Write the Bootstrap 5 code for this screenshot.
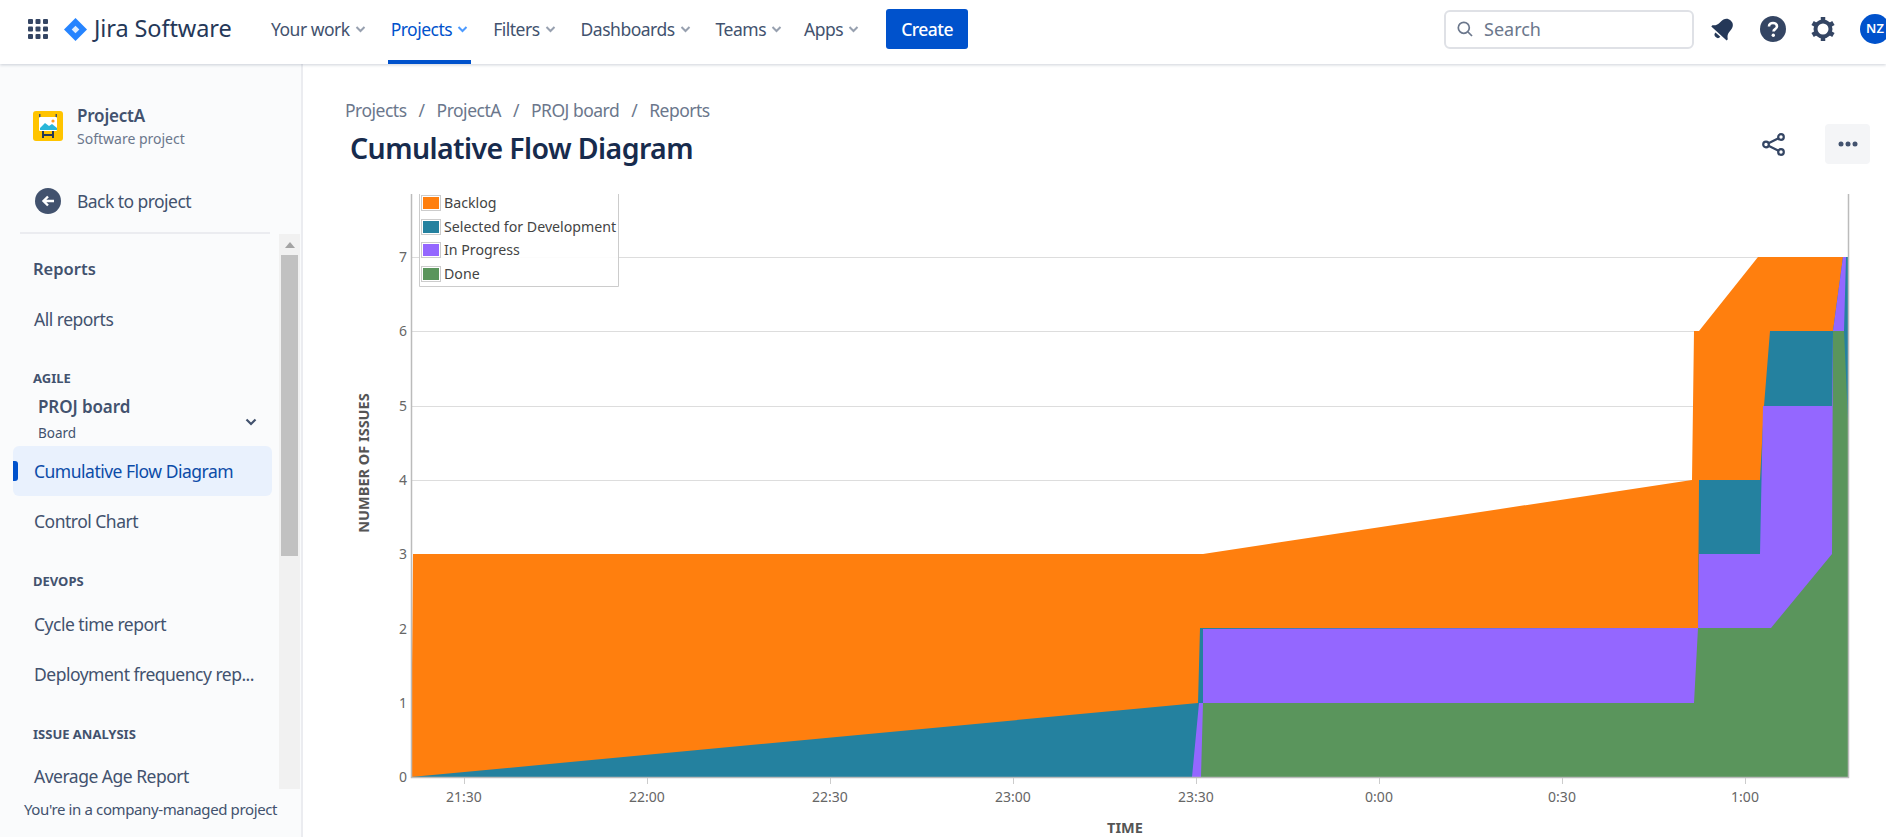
<!DOCTYPE html>
<html lang="en">
<head>
<meta charset="utf-8">
<title>Cumulative Flow Diagram</title>
<link href="https://cdn.jsdelivr.net/npm/bootstrap@5.3.0/dist/css/bootstrap.min.css" rel="stylesheet">
<style>
html,body{height:100%;overflow:hidden;}
body{font-family:"Noto Sans","Open Sans",sans-serif;color:#42526e;background:#fff;}
.topbar{height:64px;padding-bottom:6px;box-shadow:0 1px 3px rgba(9,30,66,.2);position:relative;z-index:2;background:#fff;}
.apps-ico{margin-left:28px;width:20px;height:20px;flex:none;}
.logo-ico{margin-left:16px;width:23px;height:23px;flex:none;}
.brand-name{margin-left:7px;width:174px;font-size:23.5px;color:#253858;flex:none;letter-spacing:-.1px;}
.nav-entry{height:58px;display:flex;align-items:center;font-size:17.5px;letter-spacing:-.5px;color:#42526e;padding:0 3px;margin-right:19px;position:relative;white-space:nowrap;}
.nav-entry svg{margin-left:5px;width:11px;height:8px;}
.nav-entry.on{color:#0052cc;}
.nav-entry.on::after{content:"";position:absolute;left:0;right:0;bottom:-6px;height:4px;background:#0052cc;}
.nav-tight{margin-right:16px;}
.make-btn{width:82px;height:40px;background:#0052cc;color:#fff;font-size:17.5px;letter-spacing:-.5px;font-weight:500;border-radius:3px;border:0;padding:0;margin-left:5px;}
.find-box{width:250px;height:39px;border:2px solid #dfe1e6;border-radius:6px;padding-left:11px;color:#6b778c;font-size:18px;gap:11px;}
.top-ico{flex:none;}
.gap-bell{margin-left:17px;}
.gap-top{margin-left:25px;}
.avatar-dot{width:30px;height:30px;border-radius:50%;background:#0052cc;color:#fff;font-size:13px;font-weight:600;flex:none;margin-right:-4px;margin-left:25px;}
.shell{height:773px;}
.side{width:303px;flex:none;background:#fafbfc;border-right:2px solid #ebecf0;}
.proj-head{height:105px;padding:41px 0 0 33px;gap:14px;}
.proj-ico{width:30px;height:30px;flex:none;margin-top:6px;}
.proj-name{font-size:17px;font-weight:600;line-height:22px;color:#42526e;letter-spacing:-.2px;}
.proj-kind{font-size:14px;line-height:24px;color:#6b778c;}
.back-row{height:63px;padding:1px 0 0 35px;gap:16px;font-size:17.5px;letter-spacing:-.55px;color:#42526e;}
.side-rule{height:2px;background:#ebecf0;margin:0 31px 0 20px;}
.side-body{height:555px;}
.side-scroll{flex:1;overflow:hidden;position:relative;}
.rail{width:21px;flex:none;background:#f1f1f1;margin-right:1px;position:relative;}
.rail-top{height:21px;}
.rail-thumb{height:301px;background:#c1c1c1;margin:0 2px;}
.side-title{font-size:16.5px;font-weight:600;color:#42526e;padding:20.5px 0 0 33px;line-height:28px;height:60px;}
.side-link{height:50px;font-size:17.5px;letter-spacing:-.5px;color:#42526e;margin:0 7px 0 13px;padding-left:21px;border-radius:6px;position:relative;white-space:nowrap;}
.side-link.on{background:#e9f1fd;color:#0c4ca8;}
.side-link.on::before{content:"";position:absolute;left:0;top:15px;width:5px;height:20px;background:#0052cc;border-radius:0 3px 3px 0;}
.side-cap{font-size:13px;font-weight:700;color:#42526e;padding-left:33px;line-height:18px;white-space:nowrap;margin-top:26px;}
.cap-first{margin-top:25px;}
.board-pick{padding:0 22px 0 38px;height:53px;margin-top:6px;}
.board-name{font-size:17px;font-weight:600;color:#42526e;line-height:26px;letter-spacing:-.1px;}
.board-kind{font-size:13.5px;color:#42526e;line-height:26px;}
.board-arrow{margin-top:4px;}
.link-first{margin-top:9px;}
.link-last{margin-top:8px;}
.side-foot{font-size:15px;letter-spacing:-.38px;color:#42526e;padding:9px 0 0 24px;white-space:nowrap;}
.main-area{min-width:0;}
.crumb-row{padding:33.5px 0 0 42px;font-size:17.5px;letter-spacing:-.5px;color:#6b778c;height:56px;gap:12px;line-height:24px;}
.title-row{height:70px;padding:0 16px 22px 47px;}
.page-head{font-size:28.5px;font-weight:600;color:#172b4d;margin:8px 0 0;letter-spacing:-.6px;}
.more-btn{width:45px;height:40px;background:#f4f5f7;border-radius:4px;}
.share-ico{margin-right:40px;}
.flow-chart{display:block;width:1583px;height:647px;}
.flow-chart text{font-family:"Noto Sans","Open Sans",sans-serif;}
.t-tick{font-size:14px;fill:#666;}
.t-axis{font-size:14.5px;font-weight:700;fill:#555;}
.t-leg{font-size:14.2px;fill:#444;}
</style>
</head>
<body>
<header class="topbar d-flex align-items-center">
  <svg class="apps-ico" viewBox="0 0 20 20" fill="#344563"><rect x="0" y="0" width="5" height="5" rx="1"/><rect x="7.500" y="0" width="5" height="5" rx="1"/><rect x="15" y="0" width="5" height="5" rx="1"/><rect x="0" y="7.500" width="5" height="5" rx="1"/><rect x="7.500" y="7.500" width="5" height="5" rx="1"/><rect x="15" y="7.500" width="5" height="5" rx="1"/><rect x="0" y="15" width="5" height="5" rx="1"/><rect x="7.500" y="15" width="5" height="5" rx="1"/><rect x="15" y="15" width="5" height="5" rx="1"/></svg>
  <svg class="logo-ico" viewBox="0 0 24 24"><path d="M12 0 24 12 12 24 0 12Z" fill="#2684ff"/><path d="M12 8 16 12 12 16 8 12Z" fill="#fff" opacity=".85"/></svg>
  <div class="brand-name">Jira Software</div>
  <nav class="d-flex align-items-center">
    <a class="nav-entry text-decoration-none">Your work<svg viewBox="0 0 11 8"><path d="M1.500 2 5.500 6 9.500 2" fill="none" stroke="#97a0af" stroke-width="2"/></svg></a>
    <a class="nav-entry on text-decoration-none">Projects<svg viewBox="0 0 11 8"><path d="M1.500 2 5.500 6 9.500 2" fill="none" stroke="#4c9aff" stroke-width="2"/></svg></a>
    <a class="nav-entry text-decoration-none">Filters<svg viewBox="0 0 11 8"><path d="M1.500 2 5.500 6 9.500 2" fill="none" stroke="#97a0af" stroke-width="2"/></svg></a>
    <a class="nav-entry text-decoration-none">Dashboards<svg viewBox="0 0 11 8"><path d="M1.500 2 5.500 6 9.500 2" fill="none" stroke="#97a0af" stroke-width="2"/></svg></a>
    <a class="nav-entry nav-tight text-decoration-none">Teams<svg viewBox="0 0 11 8"><path d="M1.500 2 5.500 6 9.500 2" fill="none" stroke="#97a0af" stroke-width="2"/></svg></a>
    <a class="nav-entry text-decoration-none">Apps<svg viewBox="0 0 11 8"><path d="M1.500 2 5.500 6 9.500 2" fill="none" stroke="#97a0af" stroke-width="2"/></svg></a>
    <button class="make-btn btn">Create</button>
  </nav>
  <div class="ms-auto d-flex align-items-center">
    <div class="find-box d-flex align-items-center">
      <svg width="16" height="16" viewBox="0 0 16 16" fill="none" stroke="#6b778c" stroke-width="1.700"><circle cx="6.800" cy="6.800" r="5.500"/><path d="M11 11 15 15"/></svg>
      <span>Search</span>
    </div>
    <svg class="top-ico gap-bell" width="24" height="24" viewBox="0 0 22 22" fill="#253858"><g transform="rotate(42 11 11)"><path d="M11 0.500c-4 0-6 3-6 7 0 4-1 5.500-3.500 7.500v1.500h19V15c-2.500-2-3.500-3.500-3.500-7.500 0-4-2-7-6-7Z"/><path d="M8 18a3 3 0 0 0 6 0Z"/></g></svg>
    <svg class="top-ico gap-top" width="26" height="26" viewBox="0 0 26 26"><circle cx="13" cy="13" r="13" fill="#344563"/><path d="M9 10.500c0-2.500 2-3.500 4-3.500s4 1.200 4 3.300c0 3-3.500 2.700-3.500 5.200" fill="none" stroke="#fff" stroke-width="2.600"/><circle cx="13.300" cy="19.200" r="1.700" fill="#fff"/></svg>
    <svg class="top-ico gap-top" width="24" height="24" viewBox="0 0 24 24"><circle cx="12" cy="12" r="7.500" fill="none" stroke="#344563" stroke-width="4"/><g stroke="#344563" stroke-width="4.500"><path d="M12 0V4"/><path d="M12 20V24"/><path d="M1.600 6 5 8"/><path d="M19 16 22.400 18"/><path d="M1.600 18 5 16"/><path d="M19 8 22.400 6"/></g></svg>
    <div class="avatar-dot d-flex align-items-center justify-content-center">NZ</div>
  </div>
</header>
<div class="shell d-flex">
  <aside class="side d-flex flex-column">
    <div class="proj-head d-flex">
      <svg class="proj-ico" viewBox="0 0 30 30"><rect width="30" height="30" rx="3" fill="#ffc400"/><rect x="6" y="3" width="1.500" height="4" fill="#42526e"/><rect x="22.500" y="3" width="1.500" height="4" fill="#42526e"/><rect x="6" y="6" width="18" height="14" rx="1" fill="#fff"/><path d="M7 17 12 12 16 15 19 13 24 17 24 19 7 19Z" fill="#29b6d8"/><circle cx="20" cy="10" r="1.600" fill="#ff991f"/><path d="M10 20V27M20 20V27M10 24H20" stroke="#253858" stroke-width="2"/></svg>
      <div>
        <div class="proj-name">ProjectA</div>
        <div class="proj-kind">Software project</div>
      </div>
    </div>
    <div class="back-row d-flex align-items-center">
      <svg width="26" height="26" viewBox="0 0 26 26"><circle cx="13" cy="13" r="13" fill="#42526e"/><path d="M19 13H9M13 8.500 8.500 13 13 17.500" fill="none" stroke="#fff" stroke-width="2.400"/></svg>
      <span>Back to project</span>
    </div>
    <div class="side-rule"></div>
    <div class="side-body d-flex">
      <div class="side-scroll">
        <div class="side-title">Reports</div>
        <div class="side-link d-flex align-items-center">All reports</div>
        <div class="side-cap cap-first">AGILE</div>
        <div class="board-pick d-flex align-items-center justify-content-between">
          <div>
            <div class="board-name">PROJ board</div>
            <div class="board-kind">Board</div>
          </div>
          <svg class="board-arrow" width="12" height="8" viewBox="0 0 12 8"><path d="M1.500 1.500 6 6 10.500 1.500" fill="none" stroke="#42526e" stroke-width="2.200"/></svg>
        </div>
        <div class="side-link on d-flex align-items-center">Cumulative Flow Diagram</div>
        <div class="side-link d-flex align-items-center">Control Chart</div>
        <div class="side-cap">DEVOPS</div>
        <div class="side-link link-first d-flex align-items-center">Cycle time report</div>
        <div class="side-link d-flex align-items-center">Deployment frequency rep...</div>
        <div class="side-cap">ISSUE ANALYSIS</div>
        <div class="side-link link-last d-flex align-items-center">Average Age Report</div>
      </div>
      <div class="rail">
        <div class="rail-top d-flex justify-content-center align-items-center"><svg width="10" height="6" viewBox="0 0 10 6"><path d="M5 0 10 6H0Z" fill="#a3a3a3"/></svg></div>
        <div class="rail-thumb"></div>
      </div>
    </div>
    <div class="side-foot">You're in a company-managed project</div>
  </aside>
  <main class="main-area flex-grow-1">
    <div class="crumb-row d-flex">
      <span>Projects</span><span>/</span><span>ProjectA</span><span>/</span><span>PROJ board</span><span>/</span><span>Reports</span>
    </div>
    <div class="title-row d-flex align-items-center justify-content-between">
      <h1 class="page-head">Cumulative Flow Diagram</h1>
      <div class="d-flex align-items-center">
        <svg class="share-ico" width="23" height="23" viewBox="0 0 23 23" fill="none" stroke="#344563" stroke-width="2.200"><circle cx="4" cy="11.500" r="2.800"/><circle cx="19" cy="4" r="2.800"/><circle cx="19" cy="19" r="2.800"/><path d="M6.500 10.200 16.500 5.300M6.500 12.800 16.500 17.700"/></svg>
        <div class="more-btn d-flex align-items-center justify-content-center">
          <svg width="20" height="6" viewBox="0 0 20 6" fill="#42526e"><circle cx="3" cy="3" r="2.500"/><circle cx="10" cy="3" r="2.500"/><circle cx="17" cy="3" r="2.500"/></svg>
        </div>
      </div>
    </div>
    <svg class="flow-chart" viewBox="303 190 1583 647">
      <g stroke="#ddd" stroke-width="1"><path d="M411 257.500H1848M411 331.500H1848M411 406.500H1848M411 480.500H1848"/></g>
      <polygon fill="#ff7f0e" points="411,777 413,554 1203,554 1692,480 1694,331 1699,331 1758,257 1848,257 1848,777"/>
      <polygon fill="#24819f" points="411,777 1198,703 1200,628 1698,628 1699,480 1760,480 1764,406 1770,331 1833,331 1843,257 1848,257 1848,777"/>
      <polygon fill="#9467ff" points="1192,777 1199,703 1203,703 1203,629 1698,628 1699,554 1760,554 1763,406 1832,406 1833,331 1843,257 1846,257 1844,331 1844,777"/>
      <polygon fill="#5a955c" points="1201,777 1203,703 1694,703 1698,628 1771,628 1832,554 1833,331 1844,331 1848,420 1848,777"/>
      <path d="M411.500 194V777.500H1848.500V194" fill="none" stroke="#bbb" stroke-width="1.500"/>
      <g stroke="#ccc"><path d="M464.500 778V784M647.500 778V784M830.500 778V784M1013.500 778V784M1196.500 778V784M1379.500 778V784M1562.500 778V784M1745.500 778V784"/></g>
      <g class="t-tick" text-anchor="end"><text x="407" y="782">0</text><text x="407" y="708">1</text><text x="407" y="634">2</text><text x="407" y="559">3</text><text x="407" y="485">4</text><text x="407" y="411">5</text><text x="407" y="336">6</text><text x="407" y="262">7</text></g>
      <g class="t-tick" text-anchor="middle"><text x="464" y="802">21:30</text><text x="647" y="802">22:00</text><text x="830" y="802">22:30</text><text x="1013" y="802">23:00</text><text x="1196" y="802">23:30</text><text x="1379" y="802">0:00</text><text x="1562" y="802">0:30</text><text x="1745" y="802">1:00</text></g>
      <text class="t-axis" text-anchor="middle" x="1125" y="833">TIME</text>
      <text class="t-axis" text-anchor="middle" transform="translate(369 463) rotate(-90)">NUMBER OF ISSUES</text>
      <path d="M419.500 194V286.500H618.500V194" fill="#fff" fill-opacity=".9" stroke="#ccc"/>
      <g fill="#fff" stroke="#ccc"><rect x="421.500" y="195.500" width="19" height="15"/><rect x="421.500" y="219.500" width="19" height="15"/><rect x="421.500" y="242.500" width="19" height="15"/><rect x="421.500" y="266.500" width="19" height="15"/></g>
      <rect x="423" y="197" width="16" height="12" fill="#ff7f0e"/><rect x="423" y="221" width="16" height="12" fill="#24819f"/><rect x="423" y="244" width="16" height="12" fill="#9467ff"/><rect x="423" y="268" width="16" height="12" fill="#5a955c"/>
      <g class="t-leg"><text x="444" y="208">Backlog</text><text x="444" y="232">Selected for Development</text><text x="444" y="255">In Progress</text><text x="444" y="279">Done</text></g>
    </svg>
  </main>
</div>
<script src="https://cdn.jsdelivr.net/npm/bootstrap@5.3.0/dist/js/bootstrap.bundle.min.js"></script>
</body>
</html>
